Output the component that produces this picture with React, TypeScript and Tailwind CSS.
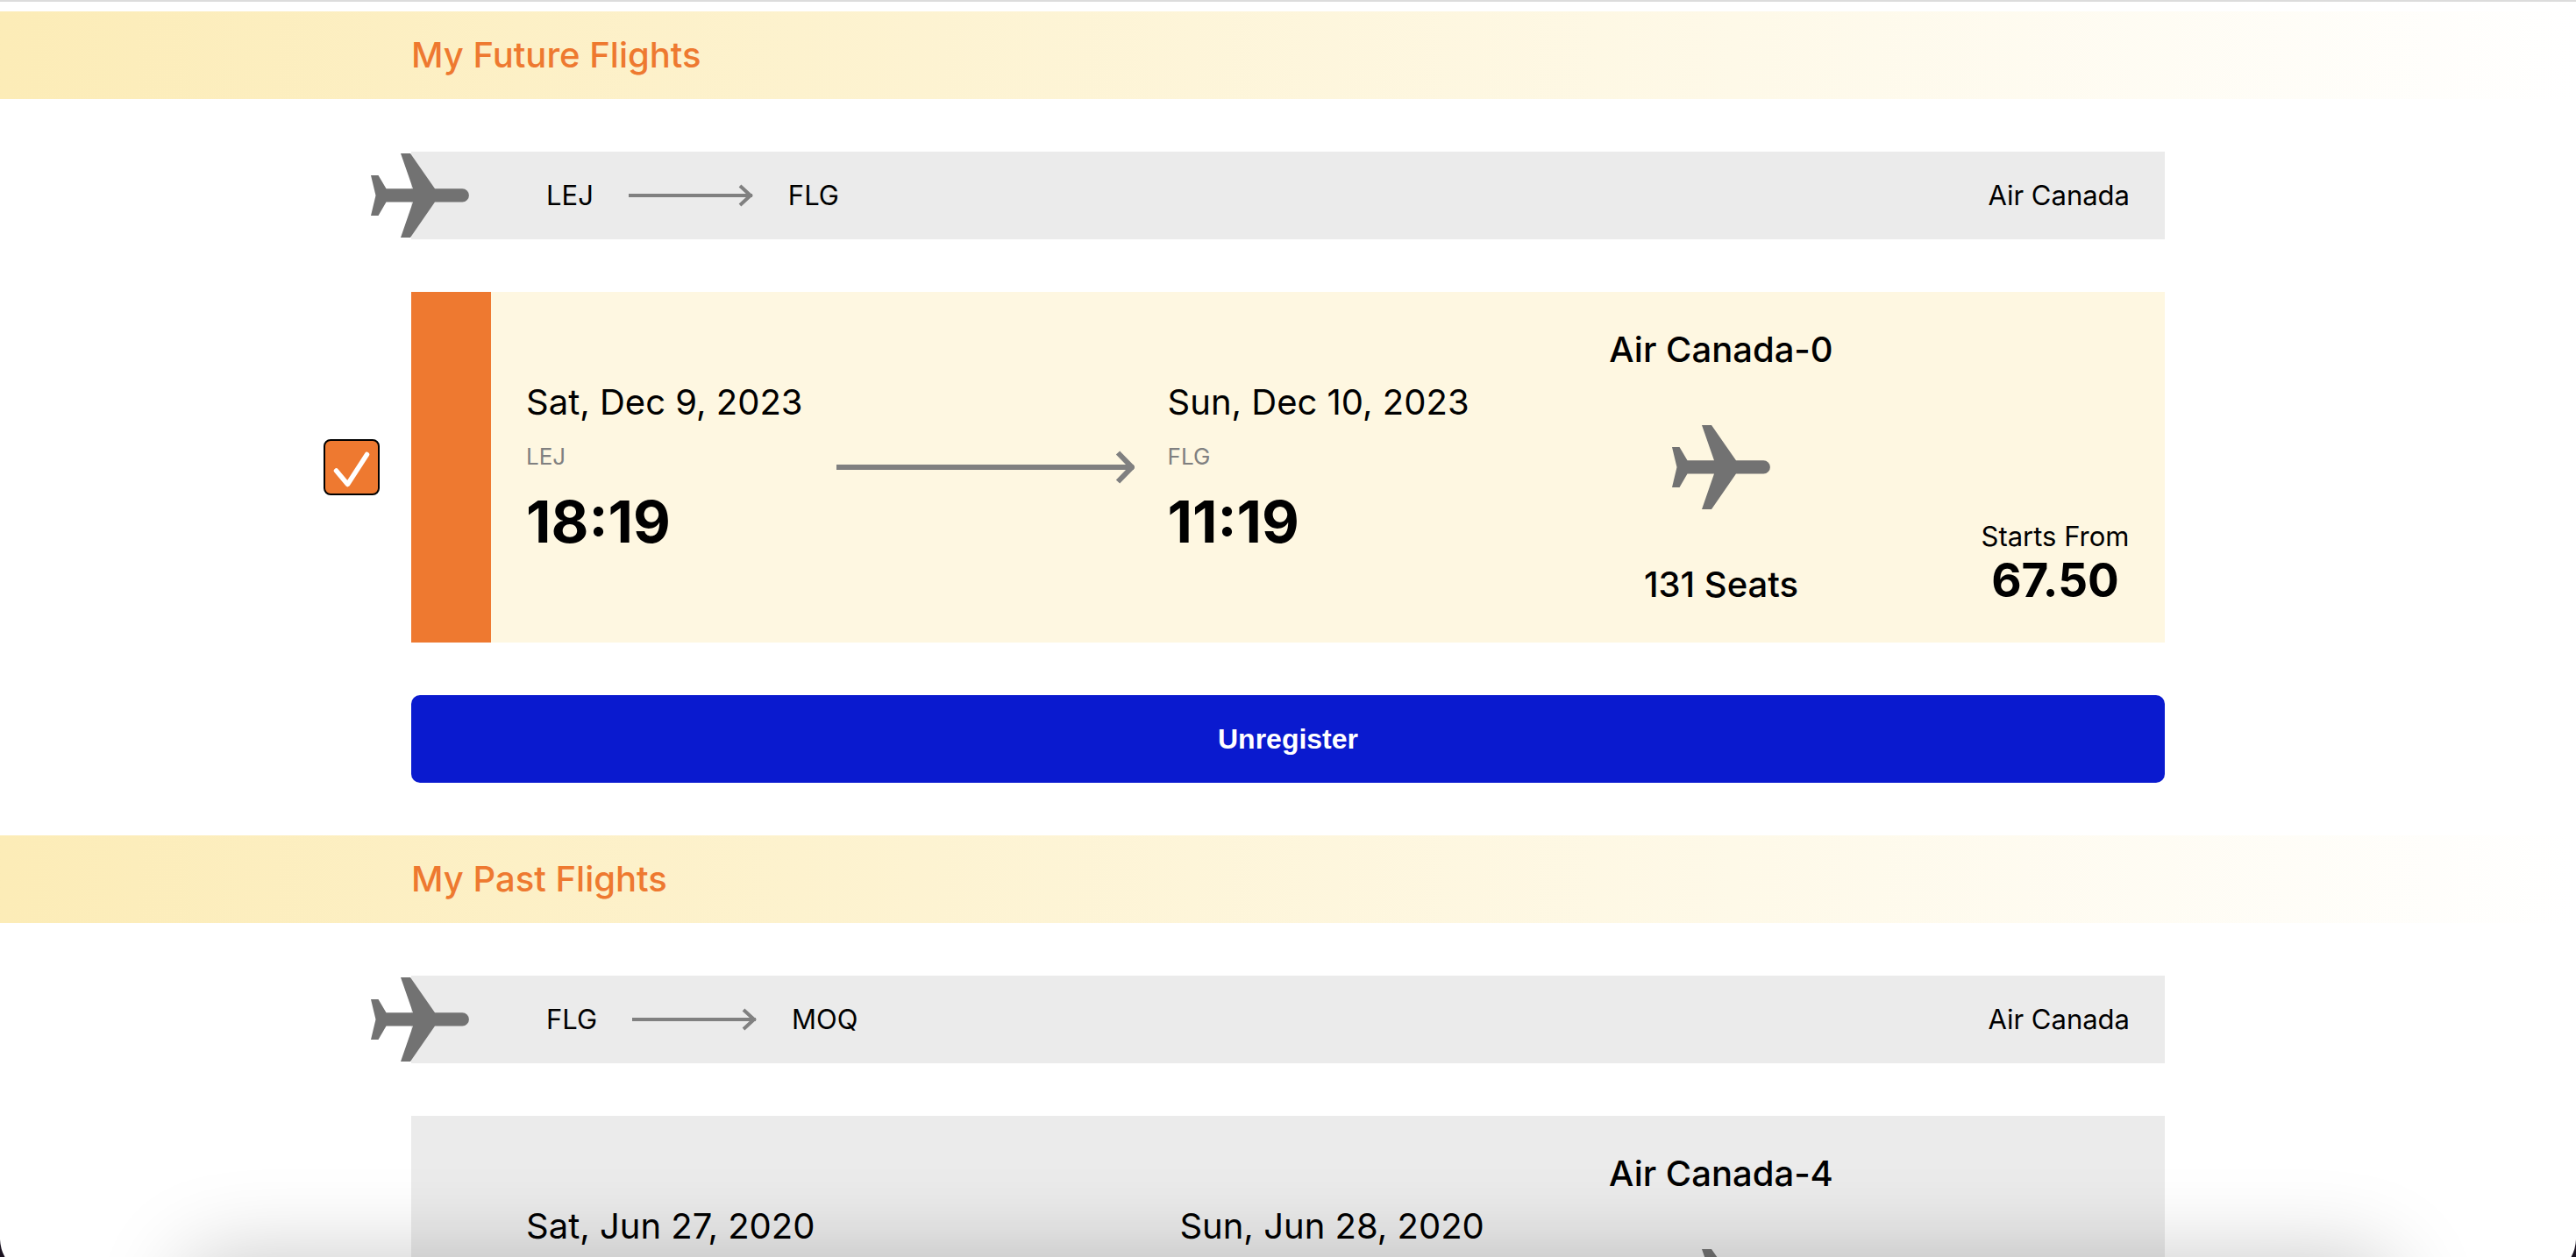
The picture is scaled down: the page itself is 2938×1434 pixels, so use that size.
import { useState } from 'react';

type Flight = {
  from: string;
  to: string;
  airline: string;
  flightName: string;
  departDate: string;
  departTime: string;
  arriveDate: string;
  arriveTime: string;
  seats: number;
  price: string;
  past?: boolean;
};

const futureFlight: Flight = {
  from: 'LEJ',
  to: 'FLG',
  airline: 'Air Canada',
  flightName: 'Air Canada-0',
  departDate: 'Sat, Dec 9, 2023',
  departTime: '18:19',
  arriveDate: 'Sun, Dec 10, 2023',
  arriveTime: '11:19',
  seats: 131,
  price: '67.50',
};

const pastFlight: Flight = {
  from: 'FLG',
  to: 'MOQ',
  airline: 'Air Canada',
  flightName: 'Air Canada-4',
  departDate: 'Sat, Jun 27, 2020',
  departTime: '10:45',
  arriveDate: 'Sun, Jun 28, 2020',
  arriveTime: '08:30',
  seats: 120,
  price: '82.00',
  past: true,
};

function Plane({ className = '' }: { className?: string }) {
  return (
    <svg viewBox="0 0 112 96" className={`h-24 w-28 shrink-0 ${className}`} aria-hidden="true">
      <path
        fill="#727272"
        d="M34 0H45L73 40.3H104.3A7.6 7.6 0 0 1 104.3 55.5H73L45 96H34L48 55.5H17.5L8.5 71H0L5.5 48L0 25H8.5L17.5 40.3H48Z"
      />
    </svg>
  );
}

function ShortArrow() {
  return (
    <svg viewBox="0 0 142 28" className="h-7 w-[142px] shrink-0" fill="none" stroke="#808080" strokeWidth="4" aria-hidden="true">
      <path d="M0 14H141M127 3L139 14L127 25" />
    </svg>
  );
}

function LongArrow() {
  return (
    <svg viewBox="0 0 340 40" className="h-10 w-[340px] shrink-0" fill="none" stroke="#808080" strokeWidth="6" aria-hidden="true">
      <path d="M0 20H339M321 3.500L337 20L321 36.500" />
    </svg>
  );
}

function SectionTitle({ children }: { children: string }) {
  return (
    <div className="bg-gradient-to-r from-[#fcecb7] to-white">
      <h2 className="mx-auto flex h-[100px] max-w-[2000px] items-center text-[40px] font-medium text-[#ee7930]">
        {children}
      </h2>
    </div>
  );
}

function RouteBar({ flight }: { flight: Flight }) {
  return (
    <div className="flex h-[100px] items-center bg-[#ebebeb] pr-10 text-[31px]">
      <Plane className="-ml-[46px] mr-[88px]" />
      <div className="flex items-center gap-10">
        <span>{flight.from}</span>
        <ShortArrow />
        <span>{flight.to}</span>
      </div>
      <span className="ml-auto">{flight.airline}</span>
    </div>
  );
}

function Stop({ date, code, time }: { date: string; code: string; time: string }) {
  return (
    <div className="flex flex-col gap-5 whitespace-nowrap">
      <span className="text-[40px] leading-[52px]">{date}</span>
      <span className="text-[26px] leading-8 text-[#808080]">{code}</span>
      <span className="text-[66px] leading-[76px] font-bold">{time}</span>
    </div>
  );
}

function FlightCard({ flight }: { flight: Flight }) {
  return (
    <article className={`flex min-h-[400px] flex-1 ${flight.past ? 'bg-[#ebebeb]' : 'bg-[#fef7e1]'}`}>
      <div className={`w-[91px] shrink-0 ${flight.past ? 'bg-[#ebebeb]' : 'bg-[#ee7930]'}`} />
      <div className="flex flex-1 p-10">
        <div className="flex flex-1 items-center gap-[38px]">
          <Stop date={flight.departDate} code={flight.from} time={flight.departTime} />
          <LongArrow />
          <Stop date={flight.arriveDate} code={flight.to} time={flight.arriveTime} />
        </div>
        <div className="mr-[168px] flex w-64 flex-col items-center justify-between text-[40px] leading-[52px] font-medium whitespace-nowrap">
          <span>{flight.flightName}</span>
          <Plane />
          <span>{flight.seats} Seats</span>
        </div>
        <div className="flex w-[170px] flex-col items-center justify-end whitespace-nowrap">
          <span className="text-[31px] leading-[38px]">Starts From</span>
          <span className="text-[53px] leading-[62px] font-bold">{flight.price}</span>
        </div>
      </div>
    </article>
  );
}

function SelectBox({ label }: { label: string }) {
  const [checked, setChecked] = useState(true);
  return (
    <span className="relative size-16 shrink-0">
      <input
        type="checkbox"
        aria-label={label}
        checked={checked}
        onChange={(e) => setChecked(e.target.checked)}
        className="block size-16 appearance-none rounded-lg border-2 border-black bg-white checked:bg-[#ee7930]"
      />
      {checked && (
        <svg viewBox="0 0 64 64" className="pointer-events-none absolute inset-0" fill="none" stroke="#fff" strokeWidth="5.500" strokeLinecap="round" strokeLinejoin="round" aria-hidden="true">
          <path d="M14.500 36L27.500 51.500L49.500 17.500" />
        </svg>
      )}
    </span>
  );
}

function Corner({ className }: { className: string }) {
  return (
    <svg viewBox="0 0 6 20" className={`absolute bottom-0 h-5 w-1.5 ${className}`} aria-hidden="true">
      <path d="M0 0Q0.500 11 5.500 20H0Z" fill="#1a1220" />
    </svg>
  );
}

export default function App() {
  return (
    <div className="h-screen overflow-x-hidden overflow-y-auto border-t-2 border-[#dcdcdc] bg-white font-['Inter',sans-serif] text-black [scrollbar-width:none]">
      <main className="flex flex-col gap-[60px] pt-[11px] pb-[60px]">
        <SectionTitle>My Future Flights</SectionTitle>
        <section className="mx-auto flex w-full max-w-[2000px] flex-col gap-[60px]">
          <RouteBar flight={futureFlight} />
          <div className="-ml-[100px] flex items-center gap-9">
            <SelectBox label="Select flight Air Canada-0" />
            <FlightCard flight={futureFlight} />
          </div>
          <button
            type="button"
            className="h-[100px] w-full rounded-[10px] bg-[#0a1acf] font-['Liberation_Sans',sans-serif] text-[32px] font-bold text-white"
          >
            Unregister
          </button>
        </section>
        <SectionTitle>My Past Flights</SectionTitle>
        <section className="mx-auto flex w-full max-w-[2000px] flex-col gap-[60px]">
          <RouteBar flight={pastFlight} />
          <div className="flex">
            <FlightCard flight={pastFlight} />
          </div>
        </section>
      </main>
      <div className="pointer-events-none fixed inset-x-0 bottom-0 h-40 overflow-hidden">
        <div className="absolute inset-x-[210px] top-full h-40 rounded-[40px] shadow-[0_0_100px_rgba(0,0,0,0.22)]" />
        <Corner className="left-0" />
        <Corner className="right-0 -scale-x-100" />
      </div>
    </div>
  );
}
